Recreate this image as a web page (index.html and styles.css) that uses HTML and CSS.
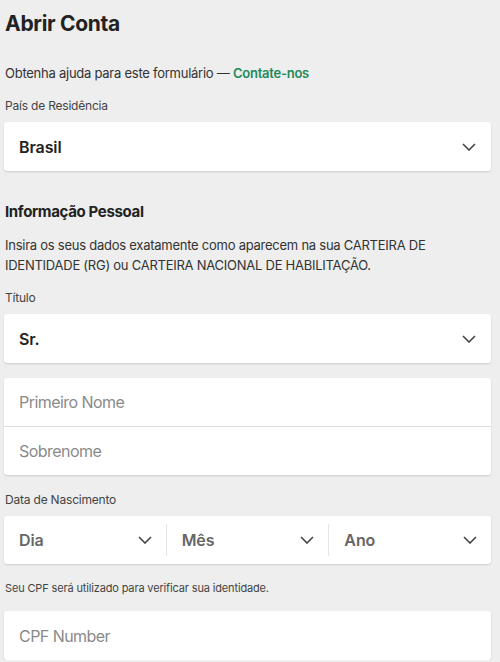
FILE: index.html
```html
<!DOCTYPE html>
<html lang="pt-BR">
<head>
    <meta charset="UTF-8">
    <meta name="viewport" content="width=device-width, initial-scale=1.0">
    <title>Abrir Conta</title>
    <link rel="stylesheet" href="styles.css">
</head>
<body>
    <div class="page">
        <h1 class="title">Abrir Conta</h1>
        <p class="help">Obtenha ajuda para este formulário — <a href="#">Contate-nos</a></p>

        <label class="label label-country">País de Residência</label>
        <div class="field select">
            <span class="value">Brasil</span>
            <svg class="chevron" width="14" height="8" viewBox="0 0 14 8"><polyline points="1,1 7,7 13,1" /></svg>
        </div>

        <h2 class="section">Informação Pessoal</h2>
        <p class="intro">Insira os seus dados exatamente como aparecem na sua CARTEIRA DE IDENTIDADE (RG) ou CARTEIRA NACIONAL DE HABILITAÇÃO.</p>

        <label class="label">Título</label>
        <div class="field select">
            <span class="value">Sr.</span>
            <svg class="chevron" width="14" height="8" viewBox="0 0 14 8"><polyline points="1,1 7,7 13,1" /></svg>
        </div>

        <div class="field group">
            <div class="row first">Primeiro Nome</div>
            <div class="row">Sobrenome</div>
        </div>

        <label class="label label-date">Data de Nascimento</label>
        <div class="field date">
            <div class="part">
                <span class="value muted">Dia</span>
                <svg class="chevron" width="14" height="8" viewBox="0 0 14 8"><polyline points="1,1 7,7 13,1" /></svg>
            </div>
            <div class="part split">
                <span class="value muted">Mês</span>
                <svg class="chevron" width="14" height="8" viewBox="0 0 14 8"><polyline points="1,1 7,7 13,1" /></svg>
            </div>
            <div class="part split">
                <span class="value muted">Ano</span>
                <svg class="chevron" width="14" height="8" viewBox="0 0 14 8"><polyline points="1,1 7,7 13,1" /></svg>
            </div>
        </div>

        <p class="note">Seu CPF será utilizado para verificar sua identidade.</p>
        <div class="field input">CPF Number</div>
    </div>
</body>
</html>
```

FILE: styles.css
```css
* {
    margin: 0;
    padding: 0;
    box-sizing: border-box;
    font-family: Inter, "Noto Sans", sans-serif;
}
body {
    background: #edeeed;
    color: #222;
}
.page {
    width: 491px;
    padding-left: 4px;
    padding-top: 10px;
}
.title {
    font-size: 21px;
    font-weight: 700;
    line-height: 28px;
    padding-left: 1px;
    color: #222;
    letter-spacing: -0.3px;
}
.help {
    margin-top: 25px;
    font-size: 13px;
    line-height: 20px;
    padding-left: 1px;
    color: #333;
    letter-spacing: -0.25px;
}
.help a {
    color: #1d8a5b;
    font-weight: 600;
    text-decoration: none;
}
.label {
    display: block;
    margin-top: 15px;
    font-size: 12px;
    line-height: 16px;
    padding-left: 1px;
    color: #444;
    letter-spacing: -0.2px;
}
.label-date {
    margin-top: 17px;
}
.field {
    background: #fff;
    border-radius: 3px;
    box-shadow: 0 1px 2px rgba(0, 0, 0, 0.14);
    margin-top: 8px;
}
.select {
    height: 49px;
    display: flex;
    align-items: center;
    justify-content: space-between;
    padding: 0 15px;
}
.value {
    font-size: 16px;
    font-weight: 600;
    color: #222;
    letter-spacing: -0.1px;
}
.value.muted {
    color: #666;
}
.chevron polyline {
    fill: none;
    stroke: #444;
    stroke-width: 1.6;
}
.section {
    margin-top: 30px;
    font-size: 15px;
    font-weight: 700;
    line-height: 22px;
    padding-left: 1px;
    color: #222;
    letter-spacing: -0.35px;
}
.intro {
    margin-top: 12px;
    font-size: 13px;
    line-height: 20px;
    padding-left: 1px;
    padding-right: 50px;
    color: #333;
    letter-spacing: -0.25px;
}
.group {
    margin-top: 15px;
}
.row {
    height: 48px;
    display: flex;
    align-items: center;
    padding: 0 15px;
    font-size: 16px;
    color: #8a8a8a;
    letter-spacing: -0.55px;
}
.row.first {
    height: 49px;
    border-bottom: 1px solid #ddd;
}
.date {
    display: flex;
    height: 48px;
}
.part {
    flex: 1;
    display: flex;
    align-items: center;
    justify-content: space-between;
    padding: 0 14px 0 15px;
}
.split {
    border-left: 1px solid #e6e6e6;
    margin: 8px 0;
}
.note {
    margin-top: 17px;
    font-size: 11px;
    line-height: 14px;
    padding-left: 1px;
    color: #444;
    letter-spacing: -0.15px;
}
.input {
    margin-top: 16px;
    height: 49px;
    display: flex;
    align-items: center;
    padding: 0 15px;
    font-size: 16px;
    color: #8a8a8a;
    letter-spacing: -0.55px;
}
```
